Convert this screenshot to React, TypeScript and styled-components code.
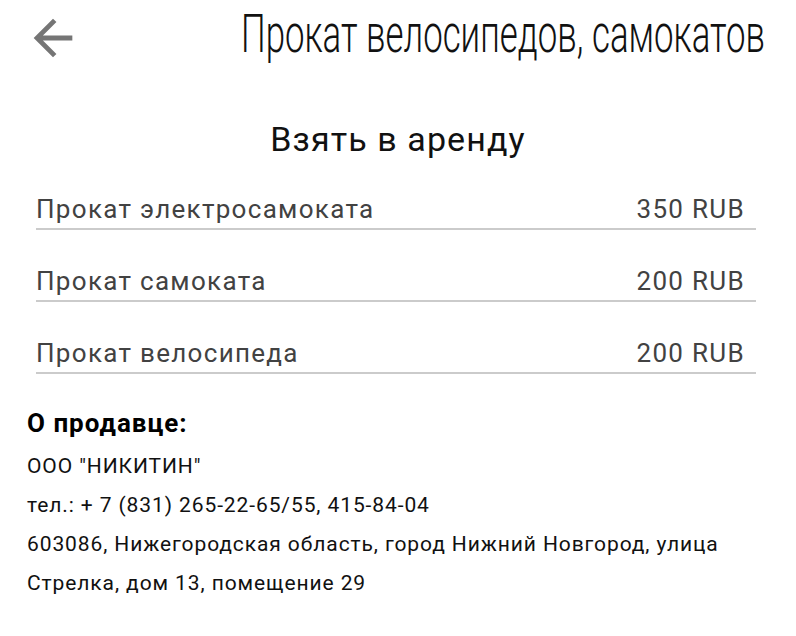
import React from "react";
import styled, { createGlobalStyle } from "styled-components";

const Global = createGlobalStyle`
  html, body { margin: 0; padding: 0; background: #fff; }
  body { font-family: Roboto, "Noto Sans", sans-serif; color: #000; }
  * { box-sizing: border-box; }
`;

const Page = styled.div`
  width: 796px;
  min-height: 636px;
  background: #fff;
  overflow: hidden;
`;

const Header = styled.header`
  display: flex;
  align-items: flex-start;
  justify-content: space-between;
  height: 120px;
  padding: 2px 31px 0 24px;
`;

const BackButton = styled.button`
  display: flex;
  border: 0;
  background: none;
  padding: 0;
  margin-top: 7px;
  cursor: pointer;
  color: #757575;
`;

const Title = styled.h1`
  flex: none;
  width: 522px;
  margin: 0;
  font-family: Roboto, sans-serif;
  font-weight: 300;
  font-size: 54px;
  line-height: 64px;
  white-space: nowrap;
  color: #111;
`;

const TitleText = styled.span`
  display: inline-block;
  transform: translateX(-2px) scaleX(0.645);
  transform-origin: left center;
`;

const SectionTitle = styled.h2`
  margin: 0;
  text-align: center;
  font-weight: 400;
  font-size: 34px;
  line-height: 38px;
  letter-spacing: 1.1px;
  color: #111;
`;

const List = styled.div`
  display: flex;
  flex-direction: column;
  padding: 0 40px 0 36px;
`;

const Row = styled.div`
  display: flex;
  align-items: flex-end;
  justify-content: space-between;
  height: 72px;
  padding: 0 11px 4px 0;
  border-bottom: 2px solid #cbcbcb;
  font-size: 26px;
  line-height: 30px;
  letter-spacing: 1.3px;
  color: #424242;
`;

const Seller = styled.section`
  padding: 0 27px;
`;

const SellerHeading = styled.h3`
  margin: 33px 0 8px;
  font-weight: 700;
  font-size: 26px;
  line-height: 32px;
  letter-spacing: 1px;
`;

const SellerText = styled.p`
  margin: 0;
  font-size: 21px;
  line-height: 39px;
  letter-spacing: 0.9px;
  color: #111;
`;

const rows = [
  { name: "Прокат электросамоката", price: "350 RUB" },
  { name: "Прокат самоката", price: "200 RUB" },
  { name: "Прокат велосипеда", price: "200 RUB" },
];

export default function App() {
  return (
    <Page>
      <Global />
      <Header>
        <BackButton aria-label="Назад">
          <svg width="58" height="58" viewBox="0 0 24 24" fill="currentColor">
            <path d="M20 11H7.83l5.59-5.59L12 4l-8 8 8 8 1.41-1.41L7.83 13H20v-2z" />
          </svg>
        </BackButton>
        <Title>
          <TitleText>Прокат велосипедов, самокатов</TitleText>
        </Title>
      </Header>
      <SectionTitle>Взять в аренду</SectionTitle>
      <List>
        {rows.map((r) => (
          <Row key={r.name}>
            <span>{r.name}</span>
            <span>{r.price}</span>
          </Row>
        ))}
      </List>
      <Seller>
        <SellerHeading>О продавце:</SellerHeading>
        <SellerText>ООО "НИКИТИН"</SellerText>
        <SellerText>тел.: + 7 (831) 265-22-65/55, 415-84-04</SellerText>
        <SellerText>
          603086, Нижегородская область, город Нижний Новгород, улица Стрелка, дом 13, помещение 29
        </SellerText>
      </Seller>
    </Page>
  );
}
